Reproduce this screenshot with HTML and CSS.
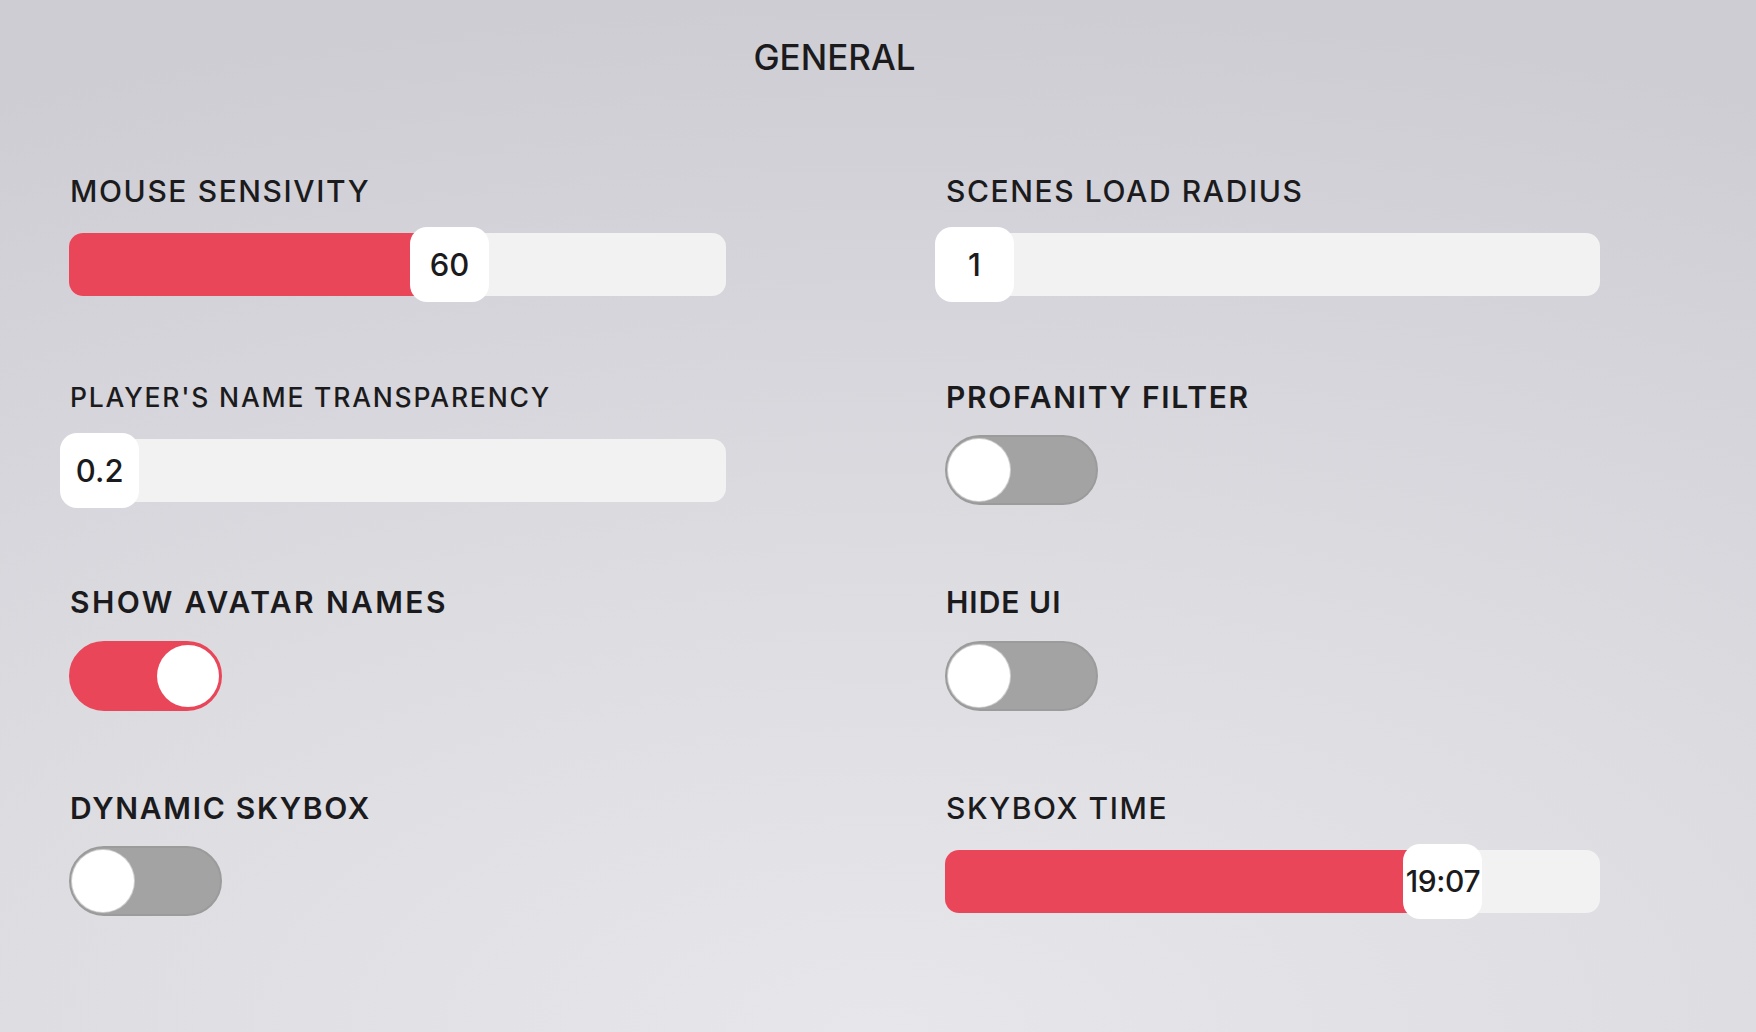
FILE: index.html
```html
<!DOCTYPE html>
<html lang="en">
<head>
<meta charset="utf-8">
<title>General Settings</title>
<link rel="stylesheet" href="styles.css">
</head>
<body>
<main class="panel">
  <h1 class="title">GENERAL</h1>
  <div class="grid">
    <section class="cell">
      <div class="label label-slider">MOUSE SENSIVITY</div>
      <div class="control">
        <div class="slider" style="--p:0.587">
          <div class="track"><div class="fill"></div></div>
          <div class="thumb">60</div>
        </div>
      </div>
    </section>
    <section class="cell">
      <div class="label label-slider">SCENES LOAD RADIUS</div>
      <div class="control">
        <div class="slider" style="--p:0">
          <div class="track"><div class="fill"></div></div>
          <div class="thumb">1</div>
        </div>
      </div>
    </section>
    <section class="cell">
      <div class="label label-slider label-small">PLAYER'S NAME TRANSPARENCY</div>
      <div class="control">
        <div class="slider" style="--p:0.002">
          <div class="track"><div class="fill"></div></div>
          <div class="thumb">0.2</div>
        </div>
      </div>
    </section>
    <section class="cell">
      <div class="label label-toggle">PROFANITY FILTER</div>
      <div class="control">
        <div class="toggle"><div class="knob"></div></div>
      </div>
    </section>
    <section class="cell">
      <div class="label label-toggle label-wide">SHOW AVATAR NAMES</div>
      <div class="control">
        <div class="toggle on"><div class="knob"></div></div>
      </div>
    </section>
    <section class="cell">
      <div class="label label-toggle label-tight">HIDE UI</div>
      <div class="control">
        <div class="toggle"><div class="knob"></div></div>
      </div>
    </section>
    <section class="cell">
      <div class="label label-toggle">DYNAMIC SKYBOX</div>
      <div class="control">
        <div class="toggle"><div class="knob"></div></div>
      </div>
    </section>
    <section class="cell">
      <div class="label label-slider">SKYBOX TIME</div>
      <div class="control">
        <div class="slider" style="--p:0.786">
          <div class="track"><div class="fill"></div></div>
          <div class="thumb thumb-time">19:07</div>
        </div>
      </div>
    </section>
  </div>
</main>
</body>
</html>
```
FILE: styles.css
```css
html, body {
  margin: 0;
  padding: 0;
  height: 100%;
}

body {
  font-family: Inter, "Noto Sans", "Liberation Sans", sans-serif;
  color: #1b1b1d;
  background: radial-gradient(120% 100% at 50% 100%, #e7e6eb 0%, #dddce1 45%, #cecdd4 100%);
  overflow: hidden;
}

.panel {
  width: 1531px;
  padding: 40px 0 0 69px;
}

.title {
  margin: 0;
  font-size: 35px;
  line-height: 35px;
  font-weight: 500;
  letter-spacing: 0;
  text-align: center;
}

.grid {
  margin-top: 101px;
  display: grid;
  grid-template-columns: 657px 655px;
  column-gap: 219px;
  row-gap: 79.5px;
}

.cell {
  display: flex;
  flex-direction: column;
}

.label {
  height: 30px;
  line-height: 30px;
  font-size: 30px;
  white-space: nowrap;
  padding-left: 1px;
}

.label-slider {
  font-weight: 500;
  letter-spacing: 1.6px;
}

.label-small {
  font-size: 26.5px;
  letter-spacing: 1.8px;
}

.label-toggle {
  font-weight: 600;
  letter-spacing: 1.7px;
}

.label-wide {
  letter-spacing: 2.4px;
}

.label-tight {
  letter-spacing: 1px;
}

.control {
  margin-top: 21px;
  height: 75px;
  display: flex;
  align-items: center;
}

/* Slider */
.slider {
  position: relative;
  width: 100%;
  height: 75px;
  display: flex;
  align-items: center;
}

.track {
  width: 100%;
  height: 63px;
  border-radius: 14px;
  background: #f2f2f2;
  overflow: hidden;
}

.fill {
  height: 100%;
  width: calc(30px + var(--p) * (100% - 59px));
  background: #ea465a;
}

.thumb {
  position: absolute;
  top: 0;
  left: calc(-10px + var(--p) * (100% - 59px));
  width: 79px;
  height: 75px;
  border-radius: 17px;
  background: #ffffff;
  display: flex;
  align-items: center;
  justify-content: center;
  font-size: 31px;
  font-weight: 500;
  color: #1b1b1d;
}

.thumb-time {
  letter-spacing: -0.4px;
  font-size: 30px;
}

/* Toggle */
.toggle {
  position: relative;
  width: 153px;
  height: 70px;
  box-sizing: border-box;
  border-radius: 35px;
  background: #a3a3a3;
  border: 2px solid #9b9b9b;
}

.toggle.on {
  background: #ea465a;
  border-color: #ea465a;
}

.knob {
  position: absolute;
  top: 2px;
  left: 1px;
  width: 62px;
  height: 62px;
  border-radius: 50%;
  background: #ffffff;
  box-shadow: 0 0 0 1px rgba(225, 225, 225, 0.7);
}

.toggle.on .knob {
  left: auto;
  right: 1px;
  box-shadow: none;
}
```
